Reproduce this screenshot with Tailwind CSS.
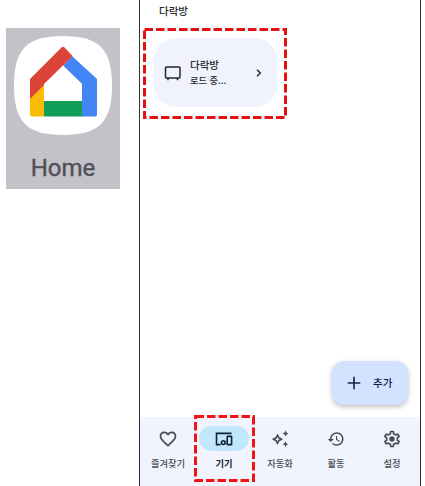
<!DOCTYPE html>
<html lang="ko">

<head>
    <meta charset="UTF-8">
    <meta name="viewport" content="width=device-width, initial-scale=1.0">
    <title>Home</title>
    <script src="https://cdn.jsdelivr.net/npm/@tailwindcss/browser@4"></script>
</head>

<body class="bg-white font-['Noto_Sans_CJK_KR',sans-serif] text-[#25272c]">
    <div class="flex h-[486px] w-[425px] overflow-hidden">
        <!-- app icon -->
        <div class="mt-7 ml-1.5 flex h-[161px] w-[114px] shrink-0 flex-col items-center bg-[#c4c2c9] pt-2">
            <svg class="h-[99px] w-[98px]" viewBox="0 0 98 99">
                <path fill="#fff" d="M49 0C85 0 98 13 98 49.500S85 99 49 99 0 86 0 49.500 13 0 49 0Z" />
                <path fill="#fbbc05" d="M16 62l14-14v32.500H18q-2 0-2-2Z" />
                <path fill="#109d58" d="M30 65h39v15.500H30Z" />
                <path fill="#4285f4" d="M58 20 83 43V78.500q0 2-2 2H68V48L49 30Z" />
                <path fill="#db4437" d="M47.500 11.500q1.500-1.500 3 0L58.500 20 30 49 16 63V43Z" />
                <path fill="#fff" d="M49 29.500 68 48v17H30V48Z" />
            </svg>
            <div class="mt-[17px] font-[Roboto,sans-serif] text-[24px] leading-[32px] text-[#505058] [-webkit-text-stroke:0.4px_#505058]">Home</div>
        </div>

        <!-- phone -->
        <div class="relative ml-[19px] flex w-[282px] shrink-0 flex-col border-x border-[#303033] bg-white">
            <div class="h-[38px] pt-[3px] pl-[19px] text-[10.5px] leading-4 font-medium">다락방</div>
            <div class="ml-3.5 flex h-[69px] w-[123px] items-center rounded-[22px] bg-[#f0f3fe] pl-2.5">
                <svg class="h-[18px] w-[18px]" viewBox="0 0 18 18" fill="none" stroke="#25272c" stroke-width="1.500">
                    <rect x="1.500" y="3" width="14.500" height="11" rx="1" />
                    <path d="M4 14v2.300M13.500 14v2.300" />
                </svg>
                <div class="ml-2 w-[62px]">
                    <div class="text-[10.5px] leading-4 font-medium">다락방</div>
                    <div class="text-[9.200px] leading-[15px] font-medium">로드 중...</div>
                </div>
                <svg class="h-3 w-3" viewBox="0 0 12 12" fill="none" stroke="#25272c" stroke-width="1.500">
                    <path d="M5 2.700 8.300 6 5 9.300" />
                </svg>
            </div>

            <button class="mt-[254px] mr-3 flex h-11 w-[76px] items-center self-end rounded-xl bg-[#d3e2fe] pl-[15px] text-[10.5px] font-medium text-[#10234a] shadow-[0_2px_5px_rgba(0,0,0,0.25)]">
                <svg class="h-3.5 w-3.5" viewBox="0 0 14 14" stroke="#10234a" stroke-width="1.600">
                    <path d="M7 .7v12.600M.7 7h12.600" />
                </svg>
                <span class="ml-3">추가</span>
            </button>

            <nav class="mt-auto grid h-[69px] grid-cols-5 bg-[#f1f4fd] pt-[9px] text-[9.300px] leading-4 font-medium text-[#4a4c52]">
                <div class="flex flex-col items-center gap-1">
                    <div class="flex h-[25px] w-[50px] items-center justify-center">
                        <svg class="h-5 w-5" viewBox="0 0 24 24" fill="currentColor">
                            <path d="M16.500 3c-1.740 0-3.410.810-4.500 2.090C10.910 3.810 9.240 3 7.500 3 4.420 3 2 5.420 2 8.500c0 3.780 3.400 6.860 8.550 11.540L12 21.350l1.450-1.320C18.600 15.360 22 12.280 22 8.500 22 5.420 19.580 3 16.500 3zm-4.400 15.550l-.1.100-.1-.1C7.140 14.240 4 11.390 4 8.500 4 6.500 5.500 5 7.500 5c1.540 0 3.040.990 3.570 2.360h1.870C13.460 5.990 14.960 5 16.500 5c2 0 3.500 1.500 3.500 3.500 0 2.890-3.140 5.740-7.900 10.050z" />
                        </svg>
                    </div>
                    <span class="whitespace-nowrap">즐겨찾기</span>
                </div>
                <div class="flex flex-col items-center gap-1">
                    <div class="flex h-[25px] w-[50px] items-center justify-center rounded-full bg-[#c1e7fd] text-[#0b2335]">
                        <svg class="h-[18px] w-[18px]" viewBox="0 0 18 18" fill="none" stroke="currentColor" stroke-width="1.600">
                            <path d="M16.500 3.400H1.500V14.600H5.500" />
                            <circle cx="8.300" cy="12.600" r="1.900" />
                            <rect x="12.200" y="6.400" width="4.400" height="8.200" rx=".4" />
                        </svg>
                    </div>
                    <span class="font-bold text-[#202226]">기기</span>
                </div>
                <div class="flex flex-col items-center gap-1">
                    <div class="flex h-[25px] w-[50px] items-center justify-center">
                        <svg class="h-[18px] w-[18px]" viewBox="0 0 18 18" fill="currentColor">
                            <path fill="none" stroke="currentColor" stroke-width="1.700" stroke-linejoin="round" d="M6.500 5 7.900 7.900 10.800 9.200 7.900 10.500 6.500 13.400 5.100 10.500 2.200 9.200 5.100 7.900Z" />
                            <path d="M14.500.5l.9 2.100 2.100.9-2.100.9-.9 2.100-.9-2.100-2.100-.9 2.100-.9ZM14.500 11.200l.9 2.100 2.100.9-2.100.9-.9 2.100-.9-2.100-2.100-.9 2.100-.9Z" />
                        </svg>
                    </div>
                    <span>자동화</span>
                </div>
                <div class="flex flex-col items-center gap-1">
                    <div class="flex h-[25px] w-[50px] items-center justify-center">
                        <svg class="h-[18px] w-[18px]" viewBox="0 0 24 24" fill="currentColor">
                            <path d="M13 3c-4.970 0-9 4.030-9 9H1l3.890 3.890.070.140L9 12H6c0-3.870 3.130-7 7-7s7 3.130 7 7-3.130 7-7 7c-1.930 0-3.680-.790-4.940-2.060l-1.420 1.420C8.270 19.990 10.510 21 13 21c4.970 0 9-4.030 9-9s-4.030-9-9-9zm-1 5v5l4.280 2.540.720-1.210-3.500-2.080V8H12z" />
                        </svg>
                    </div>
                    <span>활동</span>
                </div>
                <div class="flex flex-col items-center gap-1">
                    <div class="flex h-[25px] w-[50px] items-center justify-center">
                        <svg class="h-5 w-5" viewBox="0 0 24 24" fill="currentColor">
                            <path d="M19.430 12.980c.040-.320.070-.640.070-.980s-.030-.660-.070-.980l2.110-1.650c.190-.150.240-.420.120-.640l-2-3.460c-.090-.160-.260-.250-.440-.250-.060 0-.120.010-.170.030l-2.490 1c-.520-.400-1.080-.730-1.690-.980l-.380-2.650C14.460 2.180 14.250 2 14 2h-4c-.250 0-.460.180-.490.420l-.380 2.650c-.610.250-1.170.590-1.690.980l-2.490-1c-.060-.020-.120-.030-.180-.030-.170 0-.340.090-.430.250l-2 3.460c-.130.220-.070.490.120.640l2.110 1.650c-.040.320-.070.650-.070.980s.030.660.070.980l-2.110 1.650c-.190.150-.240.420-.120.640l2 3.460c.090.160.260.250.440.250.060 0 .120-.010.170-.030l2.490-1c.520.400 1.080.730 1.690.980l.380 2.650c.030.240.240.420.490.420h4c.250 0 .460-.180.490-.420l.380-2.650c.610-.250 1.170-.590 1.690-.980l2.490 1c.060.020.120.030.180.030.170 0 .340-.090.430-.250l2-3.460c.120-.220.070-.490-.120-.640l-2.110-1.650zm-1.980-1.710c.040.310.050.520.050.730s-.020.430-.050.730l-.140 1.130.890.700 1.080.840-.700 1.210-1.270-.510-1.040-.420-.900.680c-.430.320-.840.560-1.250.730l-1.060.430-.160 1.130-.200 1.350h-1.400l-.190-1.350-.160-1.130-1.060-.430c-.430-.180-.830-.410-1.230-.710l-.910-.700-1.060.430-1.270.510-.700-1.210 1.080-.840.890-.700-.140-1.130c-.030-.310-.050-.540-.050-.740s.020-.430.050-.730l.140-1.130-.890-.700-1.080-.840.700-1.210 1.270.510 1.040.420.900-.680c.430-.320.840-.560 1.250-.730l1.060-.430.160-1.130.200-1.350h1.390l.190 1.350.160 1.130 1.060.430c.430.180.830.410 1.230.710l.910.700 1.060-.430 1.270-.510.700 1.210-1.070.850-.890.700.140 1.130z" />
                            <circle cx="12" cy="12" r="3.300" />
                        </svg>
                    </div>
                    <span>설정</span>
                </div>
            </nav>

            <!-- highlight boxes -->
            <svg class="absolute top-[28px] left-[3px] h-[91px] w-[144px]" viewBox="0 0 144 91" fill="none" stroke="#e01212" stroke-width="3" stroke-dasharray="8.500 3">
                <rect x="1.500" y="1.500" width="141" height="88" />
            </svg>
            <svg class="absolute top-[415px] left-[54px] h-[67px] w-[61px]" viewBox="0 0 61 67" fill="none" stroke="#f01414" stroke-width="3" stroke-dasharray="8.500 3">
                <rect x="1.500" y="1.500" width="58" height="64" />
            </svg>
        </div>
    </div>
</body>

</html>
